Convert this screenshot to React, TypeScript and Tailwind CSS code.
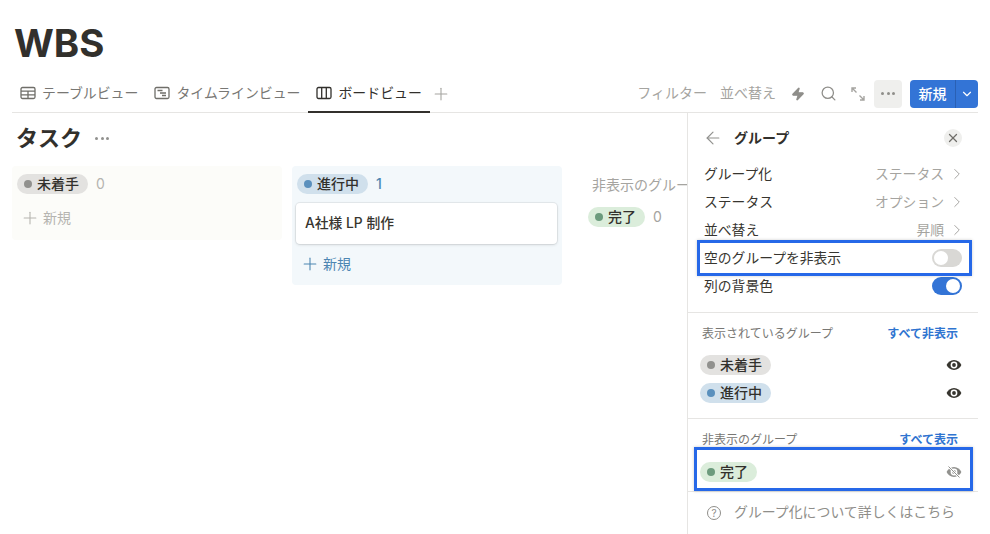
import type { ReactNode } from 'react';
import { ArrowLeft, ChevronDown, ChevronRight, Plus, Search, X, Zap } from 'lucide-react';

const FONT = 'font-["Inter","Noto_Sans_CJK_JP",sans-serif]';

type PillTone = 'gray' | 'blue' | 'green';

const pillStyles: Record<PillTone, { bg: string; dot: string }> = {
  gray: { bg: 'bg-[#e3e2e0]', dot: 'bg-[#91918e]' },
  blue: { bg: 'bg-[#d0e0ec]', dot: 'bg-[#5a90bd]' },
  green: { bg: 'bg-[#dbeddb]', dot: 'bg-[#6c9b7d]' },
};

function Pill({ tone, label }: { tone: PillTone; label: string }) {
  const style = pillStyles[tone];
  return (
    <span className={`inline-flex h-5 items-center gap-[5px] rounded-full pl-[7px] pr-[9px] text-[14px] leading-5 font-medium text-[#32302c] ${style.bg}`}>
      <span className={`h-[8px] w-[8px] rounded-full ${style.dot}`} />
      {label}
    </span>
  );
}

function TableIcon() {
  return (
    <svg width="16" height="16" viewBox="0 0 16 16" fill="none" stroke="#6f6e69" strokeWidth="1.3">
      <rect x="1" y="2.5" width="14" height="11" rx="1.5" />
      <path d="M1 6.2h14M1 9.9h14M8 6.2v7.3" />
    </svg>
  );
}

function TimelineIcon() {
  return (
    <svg width="16" height="16" viewBox="0 0 16 16" fill="none" stroke="#6f6e69" strokeWidth="1.3">
      <rect x="1" y="2.5" width="14" height="11" rx="1.5" />
      <path d="M3.5 5.5h5M6 8h6M8 10.5h4" />
    </svg>
  );
}

function BoardIcon() {
  return (
    <svg width="16" height="16" viewBox="0 0 16 16" fill="none" stroke="#32302c" strokeWidth="1.3">
      <rect x="1" y="2.5" width="14" height="11" rx="1.5" />
      <path d="M5.7 2.5v11M10.3 2.5v11" />
    </svg>
  );
}

function ExpandIcon() {
  return (
    <svg width="14" height="14" viewBox="0 0 14 14" fill="none" stroke="#a5a4a0" strokeWidth="1.4">
      <path d="M1 5V1h4M1 1l4.5 4.5M13 9v4H9M13 13L8.5 8.5" />
    </svg>
  );
}

function EyeIcon({ hidden }: { hidden?: boolean }) {
  const color = hidden ? '#91918e' : '#37352f';
  return (
    <svg width="16" height="16" viewBox="0 0 16 16">
      <path d="M8 3C4.6 3 1.9 5.3.6 8c1.3 2.7 4 5 7.4 5s6.1-2.3 7.4-5C14.1 5.3 11.4 3 8 3z" fill={color} />
      <circle cx="8" cy="8" r="3.4" fill="white" />
      <circle cx="8" cy="8" r="1.9" fill={color} />
      {hidden && <path d="M2.5 2.5l11 11" stroke="white" strokeWidth="2.4" />}
      {hidden && <path d="M2.5 2.5l11 11" stroke={color} strokeWidth="1" />}
    </svg>
  );
}

function Dots({ className }: { className: string }) {
  return (
    <span className={`flex items-center gap-[2.5px] ${className}`}>
      <span className="h-[3px] w-[3px] rounded-full bg-current" />
      <span className="h-[3px] w-[3px] rounded-full bg-current" />
      <span className="h-[3px] w-[3px] rounded-full bg-current" />
    </span>
  );
}

function Tab({ icon, label, active }: { icon: ReactNode; label: string; active?: boolean }) {
  return (
    <div className={`-mb-px flex h-[33px] items-center gap-[6px] border-b-2 px-2 pb-[5px] text-[13.9px] ${active ? 'border-[#32302c] text-[#32302c]' : 'border-transparent text-[#787774]'}`}>
      {icon}
      <span>{label}</span>
    </div>
  );
}

function SettingRow({ label, value }: { label: string; value: string }) {
  return (
    <div className="flex h-7 items-center justify-between pl-4 pr-[12px] text-[13.8px]">
      <span className="text-[#37352f]">{label}</span>
      <span className="flex items-center gap-[4px] text-[#a5a4a0]">
        {value}
        <ChevronRight size={18} strokeWidth={1.3} />
      </span>
    </div>
  );
}

function Toggle({ on }: { on: boolean }) {
  return (
    <span className={`flex h-[18px] w-[30px] items-center rounded-full p-[2px] ${on ? 'justify-end bg-[#3374d6]' : 'justify-start bg-[#d9d8d5]'}`}>
      <span className="h-[14px] w-[14px] rounded-full bg-white" />
    </span>
  );
}

function ToggleRow({ label, on }: { label: string; on: boolean }) {
  return (
    <div className="flex h-7 items-center justify-between pl-4 pr-4 text-[13.8px] text-[#37352f]">
      <span>{label}</span>
      <Toggle on={on} />
    </div>
  );
}

function GroupRow({ tone, label, hidden }: { tone: PillTone; label: string; hidden?: boolean }) {
  return (
    <div className="flex h-7 items-center justify-between pl-3 pr-4">
      <Pill tone={tone} label={label} />
      <EyeIcon hidden={hidden} />
    </div>
  );
}

function SectionHead({ label, action }: { label: string; action: string }) {
  return (
    <div className="flex h-4 items-center justify-between pl-[14px] pr-5 text-[12px]">
      <span className="text-[#787774]">{label}</span>
      <span className="font-semibold text-[#2f74d0]">{action}</span>
    </div>
  );
}

export default function App() {
  return (
    <div className={`relative h-[534px] w-[990px] overflow-hidden bg-white pl-3 pr-3 ${FONT}`}>
      <h1 className="h-[80px] pl-[2px] pt-[20px] text-[38.4px] leading-[46px] font-bold text-[#32302c]">WBS</h1>

      {/* Tabs and toolbar */}
      <div className="flex h-[33px] items-center justify-between border-b border-[#e6e5e3]">
        <div className="flex items-center">
          <Tab icon={<TableIcon />} label="テーブルビュー" />
          <Tab icon={<TimelineIcon />} label="タイムラインビュー" />
          <Tab icon={<BoardIcon />} label="ボードビュー" active />
          <Plus size={20} strokeWidth={1.3} className="ml-[1px] mb-[5px] text-[#a5a4a0]" />
        </div>
        <div className="flex items-center pb-[5px] text-[14px] text-[#a5a4a0]">
          <span className="mr-[13px] -translate-y-px">フィルター</span>
          <span className="mr-[15px] -translate-y-px">並べ替え</span>
          <Zap size={14} fill="currentColor" className="mr-[15px] text-[#8f8e8a]" />
          <Search size={17} strokeWidth={1.8} className="mr-[14px] text-[#8f8e8a]" />
          <span className="mr-[9px]">
            <ExpandIcon />
          </span>
          <span className="mr-2 flex h-7 w-7 items-center justify-center rounded bg-[#efefed]">
            <Dots className="text-[#8f8e8a]" />
          </span>
          <div className="flex h-7 w-[68px] items-center rounded bg-[#3374d6] text-white">
            <span className="flex-1 text-center font-medium">新規</span>
            <span className="flex h-full w-[23px] items-center justify-center border-l border-[#2a60b4]">
              <ChevronDown size={14} />
            </span>
          </div>
        </div>
      </div>

      <div className="flex h-[421px]">
        {/* Board */}
        <div className="w-[675px] shrink-0 overflow-hidden">
          <div className="flex h-[53px] items-center gap-[13px] pl-[4px] pb-[2px]">
            <span className="text-[22px] font-bold text-[#32302c]">タスク</span>
            <Dots className="text-[#91918e]" />
          </div>
          <div className="flex">
            <div className="h-[74px] w-[270px] rounded bg-[#fcfcf9] px-[5px] pt-[7px]">
              <div className="flex items-center gap-2">
                <Pill tone="gray" label="未着手" />
                <span className="text-[14px] text-[#b5b4b0]">0</span>
              </div>
              <div className="mt-[13px] flex items-center gap-[3px] pl-[3px] text-[14px] text-[#b5b4b0]">
                <Plus size={20} strokeWidth={1.3} />
                新規
              </div>
            </div>
            <div className="ml-[10px] h-[119px] w-[270px] rounded bg-[#f3f8fb] px-[5px] pt-[7px]">
              <div className="flex items-center gap-2">
                <Pill tone="blue" label="進行中" />
                <span className="text-[14px] font-medium text-[#4d86b2]">1</span>
              </div>
              <div className="mt-[9px] ml-[-1px] flex h-[41px] w-[261px] items-center rounded bg-white pl-[9px] text-[13.8px] font-medium text-[#37352f] shadow-[0_0_0_1px_rgba(15,15,15,0.06),0_1px_3px_rgba(15,15,15,0.12)]">
                A社様 LP 制作
              </div>
              <div className="mt-[9px] flex items-center gap-[3px] pl-[3px] text-[14px] text-[#4d86b2]">
                <Plus size={20} strokeWidth={1.3} />
                新規
              </div>
            </div>
            <div className="ml-[26px] w-[99px] shrink-0 overflow-hidden">
              <div className="flex h-9 items-center pl-[4px] text-[14px] whitespace-nowrap text-[#a5a4a0]">非表示のグループ</div>
              <div className="mt-[5px] flex -translate-y-px items-center gap-2">
                <Pill tone="green" label="完了" />
                <span className="text-[14px] text-[#a5a4a0]">0</span>
              </div>
            </div>
          </div>
        </div>

        {/* Group settings panel */}
        <aside className="w-[291px] shrink-0 border-l border-[#e6e5e3]">
          <div className="flex h-[47px] items-center justify-between pr-4 pl-[15px] pt-[2px]">
            <div className="flex items-center gap-[11px]">
              <ArrowLeft size={20} strokeWidth={1.4} className="text-[#91918e]" />
              <span className="text-[14px] font-bold text-[#32302c]">グループ</span>
            </div>
            <span className="flex h-[18px] w-[18px] items-center justify-center rounded-full bg-[#efefed] text-[#6f6e69]">
              <X size={14} strokeWidth={2.2} />
            </span>
          </div>
          <SettingRow label="グループ化" value="ステータス" />
          <SettingRow label="ステータス" value="オプション" />
          <SettingRow label="並べ替え" value="昇順" />
          <ToggleRow label="空のグループを非表示" on={false} />
          <ToggleRow label="列の背景色" on />
          <div className="mt-[12px] border-t border-[#e6e5e3] pt-[13px]">
            <SectionHead label="表示されているグループ" action="すべて非表示" />
            <div className="mt-[9px]">
              <GroupRow tone="gray" label="未着手" />
              <GroupRow tone="blue" label="進行中" />
            </div>
          </div>
          <div className="mt-[11px] border-t border-[#e6e5e3] pt-[13px]">
            <SectionHead label="非表示のグループ" action="すべて表示" />
            <div className="mt-[10px]">
              <GroupRow tone="green" label="完了" hidden />
            </div>
          </div>
          <div className="mt-[5px] flex h-10 items-center gap-[13px] border-t border-[#e6e5e3] pl-[19px] pt-[2px] text-[13.9px] text-[#8f8e8a]">
            <span className="flex h-[14px] w-[14px] items-center justify-center rounded-full border border-[#8f8e8a] text-[10px] leading-none">?</span>
            グループ化について詳しくはこちら
          </div>
        </aside>
      </div>

      {/* Annotation boxes drawn over the panel */}
      <div className="absolute top-[240px] left-[697px] h-[36px] w-[275px] border-[3px] border-[#2668e8] shadow-[0_0_3px_rgba(0,0,0,0.2)]" />
      <div className="absolute top-[447px] left-[694px] h-[44px] w-[279px] border-[3px] border-[#2668e8] shadow-[0_0_3px_rgba(0,0,0,0.2)]" />
    </div>
  );
}
